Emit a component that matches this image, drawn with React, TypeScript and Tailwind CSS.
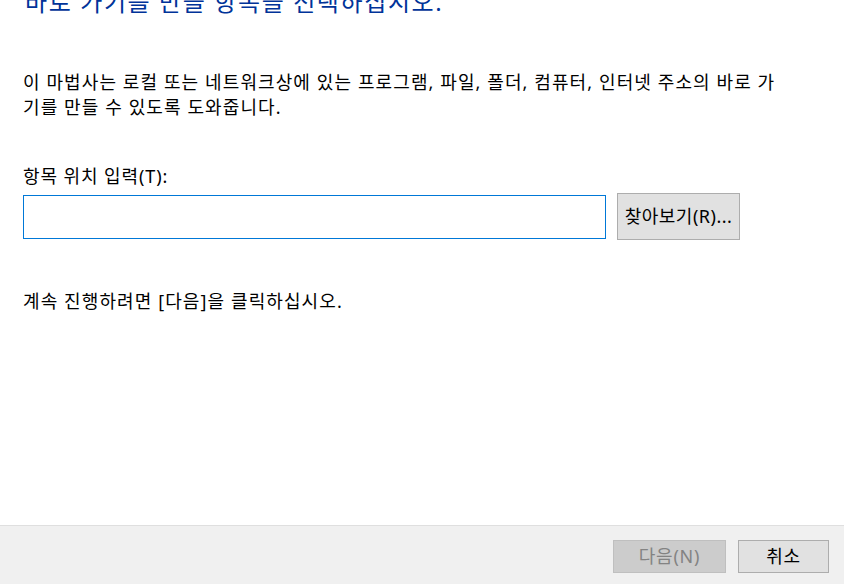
export default function App() {
  const font = { fontFamily: '"Noto Sans", "Noto Sans CJK KR", sans-serif' };
  return (
    <div className="w-[844px] h-[584px] bg-white flex flex-col overflow-hidden text-black" style={font}>
      <div className="flex-1 flex flex-col px-[23px] overflow-hidden">
        <div className="mt-[-10px] pl-[2px] text-[24px] leading-[24px] tracking-[1.6px] text-[#003399] whitespace-nowrap">
          바로 가기를 만들 항목을 선택하십시오.
        </div>
        <div className="mt-[56px] text-[18px] leading-[25px] tracking-[1.1px] whitespace-nowrap">
          이 마법사는 로컬 또는 네트워크상에 있는 프로그램, 파일, 폴더, 컴퓨터, 인터넷 주소의 바로 가
          <br />
          기를 만들 수 있도록 도와줍니다.
        </div>
        <div className="mt-[44px] text-[18px] leading-[25px] tracking-[0.9px]">항목 위치 입력(T):</div>
        <div className="mt-[4px] h-[47px] flex items-center gap-[11px]">
          <input className="w-[583px] h-[44px] border border-[#0078d7] outline-none px-2 text-[18px]" />
          <button className="w-[123px] h-[47px] bg-[#e1e1e1] border border-[#adadad] text-[18px] tracking-[0.5px] flex items-center justify-center">
            찾아보기(R)...
          </button>
        </div>
        <div className="mt-[49px] text-[18px] leading-[25px] tracking-[1.1px]">계속 진행하려면 [다음]을 클릭하십시오.</div>
      </div>
      <div className="h-[59px] shrink-0 bg-[#f0f0f0] border-t border-[#dfdfdf] flex items-start justify-end pt-[14px] pr-[15px] gap-[12px]">
        <button className="w-[113px] h-[33px] bg-[#cccccc] border border-[#bfbfbf] text-[#838383] text-[18px] tracking-[0.8px] flex items-center justify-center">
          다음(N)
        </button>
        <button className="w-[91px] h-[33px] bg-[#e1e1e1] border border-[#adadad] text-[18px] tracking-[0.8px] flex items-center justify-center">
          취소
        </button>
      </div>
    </div>
  );
}
